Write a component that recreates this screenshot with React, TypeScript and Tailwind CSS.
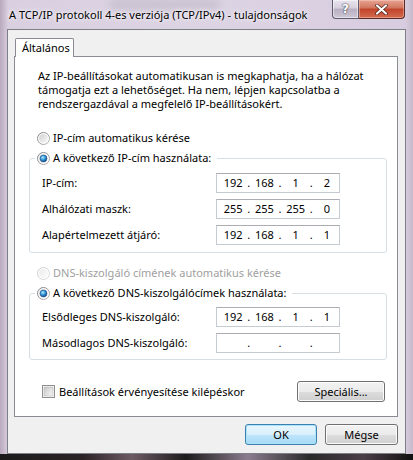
import React from "react";

const FONT = { fontFamily: '"Noto Sans", "Open Sans", Arial, sans-serif' };

function Radio({ checked, disabled }: { checked?: boolean; disabled?: boolean }) {
  const id = (checked ? "c" : "u") + (disabled ? "d" : "e");
  return (
    <svg width="13" height="13" viewBox="0 0 13 13" className="shrink-0">
      <defs>
        <linearGradient id={"ring" + id} x1="0" y1="0" x2="1" y2="1">
          <stop offset="0" stopColor={disabled ? "#c9c9c9" : "#7a7a7a"} />
          <stop offset="1" stopColor={disabled ? "#dcdcdc" : "#b8b8b8"} />
        </linearGradient>
        <linearGradient id={"in" + id} x1="0" y1="0" x2="1" y2="1">
          <stop offset="0" stopColor={disabled ? "#ececec" : "#cfcfcf"} />
          <stop offset="1" stopColor={disabled ? "#fbfbfb" : "#fbfbfb"} />
        </linearGradient>
        <radialGradient id={"dot" + id} cx="0.4" cy="0.35" r="0.7">
          <stop offset="0" stopColor="#b8ecff" />
          <stop offset="0.45" stopColor="#3aa0dd" />
          <stop offset="1" stopColor="#0e3f7d" />
        </radialGradient>
      </defs>
      <circle cx="6.5" cy="6.5" r="6" fill="#ffffff" stroke={`url(#ring${id})`} strokeWidth="1" />
      <circle cx="6.5" cy="6.5" r="4.5" fill={`url(#in${id})`} />
      {checked && <circle cx="6.5" cy="6.5" r="3.4" fill={`url(#dot${id})`} stroke="#1b4f8c" strokeWidth="0.6" />}
    </svg>
  );
}

function Checkbox() {
  return (
    <svg width="13" height="13" viewBox="0 0 13 13" className="shrink-0">
      <defs>
        <linearGradient id="cbin" x1="0" y1="0" x2="1" y2="1">
          <stop offset="0" stopColor="#c8c8c8" />
          <stop offset="1" stopColor="#f7f7f7" />
        </linearGradient>
      </defs>
      <rect x="0.5" y="0.5" width="12" height="12" fill="#ffffff" stroke="#8e8f8f" />
      <rect x="2" y="2" width="9" height="9" fill="url(#cbin)" stroke="#a9a9a9" strokeWidth="0.5" />
    </svg>
  );
}

function IpField({ parts }: { parts: string[] }) {
  return (
    <div className="w-[124px] h-[20px] bg-white border border-[#c5cbd3] border-t-[#abadb3] flex items-center pl-[4px] text-black">
      {parts.map((p, i) => (
        <React.Fragment key={i}>
          <span className="w-[25px] text-center">{p}</span>
          {i < 3 && <span className="w-[7px] text-center">.</span>}
        </React.Fragment>
      ))}
    </div>
  );
}

function Row({ label, parts }: { label: string; parts: string[] }) {
  return (
    <div className="flex items-center h-[20px]">
      <span className="w-[174px] pl-[12px] box-content whitespace-nowrap">{label}</span>
      <IpField parts={parts} />
    </div>
  );
}

function WinButton({ children, def, className }: { children: React.ReactNode; def?: boolean; className?: string }) {
  return (
    <div
      className={
        "h-[21px] rounded-[3px] border flex items-center justify-center text-black " +
        (def
          ? "border-[#3c7fb1] bg-[linear-gradient(#eaf6fd_0%,#d9f0fc_50%,#bee6fd_51%,#a7d9f5_100%)] shadow-[inset_0_0_0_1px_#a8e3f8]"
          : "border-[#707070] bg-[linear-gradient(#f2f2f2_0%,#ebebeb_50%,#dddddd_51%,#cfcfcf_100%)] shadow-[inset_0_0_0_1px_#fcfcfc]") +
        " " +
        (className || "")
      }
    >
      {children}
    </div>
  );
}

export default function App() {
  return (
    <div
      className="w-[413px] h-[460px] overflow-hidden flex flex-col bg-[linear-gradient(90deg,#b9a9bd_0%,#d9cfe0_2%,#dcd3e3_50%,#d8cde0_98%,#c8b9cc_100%)] text-[11px] leading-[14px] text-black"
      style={FONT}
    >
      {/* Title bar */}
      <div className="h-[29px] flex items-start shrink-0 relative">
        <div className="absolute left-[110px] top-0 w-[110px] h-[9px] bg-[#b9b2be] opacity-60 blur-[4px]" />
        <div className="pl-[9px] pt-[7px] leading-[16px] text-[11px] whitespace-nowrap text-black relative [text-shadow:0_0_6px_#ffffff,0_0_3px_#ffffff]">
          A TCP/IP protokoll 4-es verziója (TCP/IPv4) - tulajdonságok
        </div>
        <div className="ml-auto mr-[8px] flex">
          <div className="w-[27px] h-[19px] border border-[#5e5c6a] border-t-0 rounded-bl-[4px] bg-[linear-gradient(#e9e4ee_0%,#d6d0dd_45%,#b8b0c2_50%,#cdc6d4_100%)] flex items-center justify-center shadow-[inset_0_0_0_1px_rgba(255,255,255,0.5)]">
            <span className="text-[12px] font-bold leading-none text-white [text-shadow:0_0_2px_#3b3b4a,0_0_1px_#3b3b4a]" style={{ fontFamily: '"DejaVu Sans", sans-serif' }}>?</span>
          </div>
          <div className="w-[46px] h-[19px] border border-[#5a2a24] border-t-0 border-l-0 rounded-br-[4px] bg-[linear-gradient(#e8a493_0%,#d0745d_45%,#c1432a_50%,#d36b4f_100%)] flex items-center justify-center shadow-[inset_0_0_0_1px_rgba(255,220,210,0.4)]">
            <svg width="13" height="11" viewBox="0 0 13 11">
              <path d="M2 1.5 L11 9.5 M11 1.5 L2 9.5" stroke="#4a1d16" strokeWidth="3.6" strokeLinecap="round" />
              <path d="M2 1.5 L11 9.5 M11 1.5 L2 9.5" stroke="#ffffff" strokeWidth="2.2" strokeLinecap="round" />
            </svg>
          </div>
        </div>
      </div>

      {/* Client area */}
      <div className="mx-[7px] h-[425px] shrink-0 border border-[#7d7f86] bg-[#f0f0f0] flex flex-col">
        {/* Tab */}
        <div className="pl-[7px] pt-[8px] flex relative z-10">
          <div className="w-[59px] h-[19px] border border-b-0 border-[#898c95] rounded-t-[2px] bg-white flex items-center pl-[6px] -mb-px">
            Általános
          </div>
        </div>
        {/* Panel */}
        <div className="ml-[6px] w-[384px] h-[361px] border border-[#898c95] bg-white flex flex-col">
          <div className="pl-[23px] pt-[12px] leading-[14px]">
            <div>Az IP-beállításokat automatikusan is megkaphatja, ha a hálózat</div>
            <div>támogatja ezt a lehetőséget. Ha nem, lépjen kapcsolatba a</div>
            <div>rendszergazdával a megfelelő IP-beállításokért.</div>
          </div>

          <div className="mt-[17px] pl-[22px] h-[20px] flex items-center gap-[3px]">
            <Radio />
            <span>IP-cím automatikus kérése</span>
          </div>

          <fieldset className="ml-[14px] w-[358px] border border-[#d5dfe5] rounded-[3px] pb-[7px]">
            <legend className="ml-[5px] pl-[2px] pr-[6px] h-[20px] flex items-center gap-[3px]">
              <Radio checked />
              <span>A következő IP-cím használata:</span>
            </legend>
            <div className="pt-[5px] flex flex-col gap-[6px]">
              <Row label="IP-cím:" parts={["192", "168", "1", "2"]} />
              <Row label="Alhálózati maszk:" parts={["255", "255", "255", "0"]} />
              <Row label="Alapértelmezett átjáró:" parts={["192", "168", "1", "1"]} />
            </div>
          </fieldset>

          <div className="mt-[10px] pl-[22px] h-[20px] flex items-center gap-[3px] text-[#a0a0a0]">
            <Radio disabled />
            <span>DNS-kiszolgáló címének automatikus kérése</span>
          </div>

          <fieldset className="ml-[14px] w-[358px] border border-[#d5dfe5] rounded-[3px] pb-[6px]">
            <legend className="ml-[5px] pl-[2px] pr-[6px] h-[20px] flex items-center gap-[3px]">
              <Radio checked />
              <span>A következő DNS-kiszolgálócímek használata:</span>
            </legend>
            <div className="pt-[4px] flex flex-col gap-[6px]">
              <Row label="Elsődleges DNS-kiszolgáló:" parts={["192", "168", "1", "1"]} />
              <Row label="Másodlagos DNS-kiszolgáló:" parts={["", "", "", ""]} />
            </div>
          </fieldset>

          <div className="mt-[21px] flex items-center">
            <div className="pl-[27px] flex items-center gap-[4px]">
              <Checkbox />
              <span>Beállítások érvényesítése kilépéskor</span>
            </div>
            <WinButton className="ml-auto mr-[12px] w-[88px] h-[20px]">Speciális...</WinButton>
          </div>
        </div>

        <div className="mt-[7px] flex justify-end gap-[8px] pr-[7px]">
          <WinButton def className="w-[72px]">OK</WinButton>
          <WinButton className="w-[73px]">Mégse</WinButton>
        </div>
      </div>

      {/* Bottom frame */}
      <div className="flex-1 bg-[linear-gradient(90deg,#1a1a1a_0%,#2b2326_20%,#6d5a63_32%,#1c1c1c_45%,#8b7c8d_60%,#2a2a2a_75%,#4a3e47_88%,#111111_100%)]" />
    </div>
  );
}
